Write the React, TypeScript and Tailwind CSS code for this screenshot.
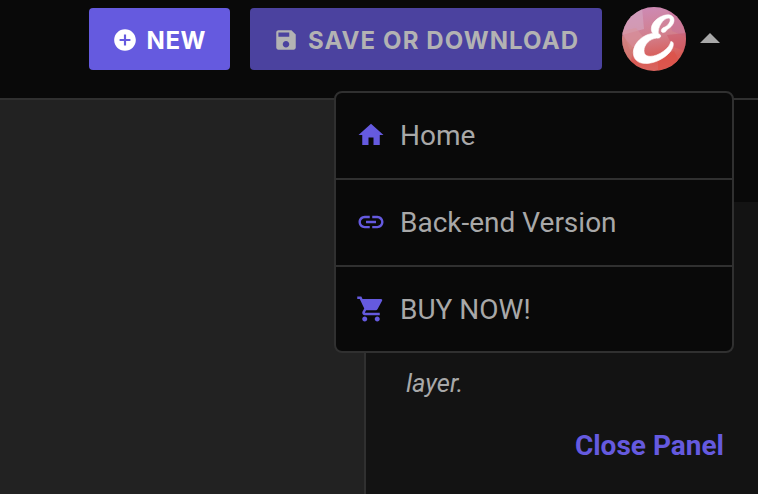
import type { ReactNode } from "react";

function Icon({ size, className, children }: { size: number; className?: string; children: ReactNode }) {
  return (
    <svg width={size} height={size} viewBox="0 0 24 24" fill="currentColor" className={`shrink-0 ${className ?? ""}`}>
      {children}
    </svg>
  );
}

function Avatar() {
  return (
    <svg width="64" height="64" viewBox="0 0 64 64" className="ml-5 shrink-0 rounded-full">
      <defs>
        <linearGradient id="avatar" x1="0.45" y1="0" x2="0.6" y2="1">
          <stop offset="0" stopColor="#cd8ab4" />
          <stop offset="0.45" stopColor="#d27f8c" />
          <stop offset="0.8" stopColor="#d95b55" />
          <stop offset="1" stopColor="#d9655f" />
        </linearGradient>
      </defs>
      <rect width="64" height="64" fill="url(#avatar)" />
      <path d="M0 0h20l2 22L0 28z" fill="#d3a8c3" opacity=".6" />
      <path d="M0 24l14-3 8 10-14 12z" fill="#d9949c" opacity=".6" />
      <path d="M0 28l12 14-4 14H0z" fill="#cf8077" opacity=".6" />
      <path d="M46 0l18 20v10L50 24z" fill="#c26c9a" opacity=".4" />
      <path d="M45 28l19-2v18l-13-4z" fill="#c95263" opacity=".45" />
      <path d="M36 52l16-8 6 12-22 8z" fill="#dd4f45" opacity=".6" />
      <path
        d="M41.2 25.6C43.8 25.3 44.8 23.6 45 22.6C49 20.4 52 17 52 13.2C52 9.8 49.4 7.8 45.8 7.8C39 7.8 29.3 14.4 29.3 21.8C29.3 23.9 29.9 25.3 30.8 26.4C21 27.4 11.3 36.2 11.3 45.6C11.3 52.7 16.3 56.5 23.6 56.5C36.6 56.5 51.3 46 51.3 37.2C51.3 35.3 50.4 34.4 48.8 34.5C47.8 41.3 36.4 49.3 28.4 49.3C24.5 49.3 22 47.6 22 43.7C22 37.6 28 31.6 34.7 31.1C37.4 31.3 38.7 30.6 38.7 29C38.7 27.5 37.4 27 36.3 26.4C35.6 20.6 40.8 11.6 46.1 11.1C48.1 10.9 48.6 12.5 48 14.3C47 17.3 44.3 19.7 42.2 20.3C38.9 21.1 38.2 25.6 41.2 25.6Z"
        fill="#fff"
        stroke="#fff"
        strokeWidth="0.6"
      />
    </svg>
  );
}

const menu = [
  { label: "Home", pad: "pb-0.5", path: "M10 20v-6h4v6h5v-8h3L12 3 2 12h3v8z" },
  {
    label: "Back-end Version",
    pad: "pb-0.5",
    path: "M3.9 12c0-1.71 1.39-3.1 3.1-3.1h4V7H7c-2.76 0-5 2.24-5 5s2.24 5 5 5h4v-1.9H7c-1.71 0-3.1-1.39-3.1-3.1zM8 13h8v-2H8v2zm9-6h-4v1.9h4c1.71 0 3.1 1.39 3.1 3.1s-1.39 3.1-3.1 3.1h-4V17h4c2.76 0 5-2.24 5-5s-2.24-5-5-5z",
  },
  {
    label: "BUY NOW!",
    pad: "pb-0",
    path: "M7 18c-1.1 0-1.99.9-1.99 2S5.9 22 7 22s2-.9 2-2-.9-2-2-2zM1 2v2h2l3.6 7.59-1.35 2.45c-.16.28-.25.61-.25.96 0 1.1.9 2 2 2h12v-2H7.42c-.14 0-.25-.11-.25-.25l.03-.12.9-1.63h7.45c.75 0 1.41-.41 1.75-1.03l3.58-6.49A1.003 1.003 0 0020 4H5.21l-.94-2H1zm16 16c-1.1 0-1.99.9-1.99 2s.89 2 1.99 2 2-.9 2-2-.9-2-2-2z",
  },
];

export default function App() {
  return (
    <div className="relative flex h-[494px] w-[758px] flex-col overflow-hidden bg-[#090909] font-['Roboto',sans-serif] text-[#a8a8a8]">
      <header className="flex h-[100px] shrink-0 items-start border-b-2 border-[#303030] pt-[7px] pl-[89px]">
        <button className="mt-px flex h-[62px] w-[141px] items-center rounded-[4px] bg-[#655adf] pt-px pl-[23px] font-['Inter',sans-serif] text-[24px] font-bold whitespace-nowrap text-white">
          <Icon size={26}>
            <path d="M12 2C6.48 2 2 6.48 2 12s4.48 10 10 10 10-4.48 10-10S17.52 2 12 2zm5 11h-4v4h-2v-4H7v-2h4V7h2v4h4v2z" />
          </Icon>
          <span className="ml-[8.5px] pt-[3px] tracking-[0.6px]">NEW</span>
        </button>
        <button className="mt-px ml-5 flex h-[62px] w-[352px] items-center rounded-[4px] bg-[#4b429f] pt-px pl-[23px] font-['Inter',sans-serif] text-[24px] font-bold whitespace-nowrap text-[#b3b3b3]">
          <Icon size={26}>
            <path d="M17 3H5c-1.11 0-2 .9-2 2v14c0 1.1.89 2 2 2h14c1.1 0 2-.9 2-2V7l-4-4zm-5 16c-1.66 0-3-1.34-3-3s1.34-3 3-3 3 1.34 3 3-1.34 3-3 3zm3-10H5V5h10v4z" />
          </Icon>
          <span className="ml-[9px] pt-[3px] tracking-[1.1px]">SAVE OR DOWNLOAD</span>
        </button>
        <Avatar />
        <svg width="20" height="10" viewBox="0 0 20 10" className="mt-[26px] ml-[14px]" fill="#a8a8a8">
          <path d="M0 10L10 0l10 10z" />
        </svg>
      </header>

      <div className="flex min-h-0 flex-1">
        <main className="w-[364px] shrink-0 bg-[#222222]" />
        <aside className="flex flex-1 flex-col border-l-2 border-[#303030]">
          <div className="h-[102px] shrink-0" />
          <div className="flex flex-1 flex-col bg-[#131313] pt-[166px] pr-[34px] pl-10">
            <p className="text-[25.5px] leading-[30px] italic">layer.</p>
            <button className="mt-8 self-end text-[28px] leading-8 font-bold whitespace-nowrap text-[#655adf]">Close Panel</button>
          </div>
        </aside>
      </div>

      <nav className="absolute top-[91px] left-[334px] grid h-[262px] w-[400px] grid-rows-[87px_87px_84px] divide-y-2 divide-[#303030] rounded-lg border-2 border-[#303030] bg-[#090909]">
        {menu.map((item) => (
          <a key={item.label} className={`flex items-center gap-[14px] pl-5 text-[28px] whitespace-nowrap ${item.pad}`}>
            <Icon size={30} className="text-[#655adf]">
              <path d={item.path} />
            </Icon>
            <span className="pt-0.5 leading-8">{item.label}</span>
          </a>
        ))}
      </nav>
    </div>
  );
}
